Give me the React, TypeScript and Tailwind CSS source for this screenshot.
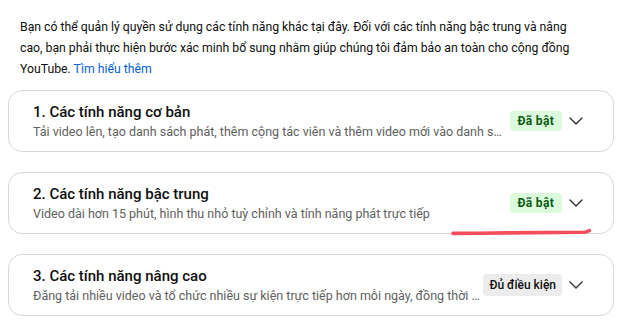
import { ChevronDown } from "lucide-react";

const features = [
  {
    title: "1. Các tính năng cơ bản",
    desc: "Tải video lên, tạo danh sách phát, thêm cộng tác viên và thêm video mới vào danh sách phát của cộng tác viên",
    status: "on",
  },
  {
    title: "2. Các tính năng bậc trung",
    desc: "Video dài hơn 15 phút, hình thu nhỏ tuỳ chỉnh và tính năng phát trực tiếp",
    status: "on",
  },
  {
    title: "3. Các tính năng nâng cao",
    desc: "Đăng tải nhiều video và tổ chức nhiều sự kiện trực tiếp hơn mỗi ngày, đồng thời kháng nghị thông báo vi phạm Nguyên tắc cộng đồng",
    status: "eligible",
  },
];

function FeatureCard({ title, desc, status }: { title: string; desc: string; status: string }) {
  return (
    <div className="ml-2 mr-[15px] flex h-[62px] items-center rounded-[14px] border border-[#d9d9d9] pl-6 pr-[25px]">
      <div className="min-w-0 flex-1">
        <div className="text-[15px] leading-5 font-medium text-[#0f0f0f]">{title}</div>
        <div className="mt-[1px] truncate text-[12.5px] leading-[18px] text-[#606060]">{desc}</div>
      </div>
      {status === "on" ? (
        <span className="ml-[6px] shrink-0 rounded-[4px] bg-[#dcfbdc] px-2 text-[12px] leading-5 font-bold tracking-[0.3px] text-[#0b5a12]">
          Đã bật
        </span>
      ) : (
        <span className="ml-[3px] shrink-0 rounded-[4px] bg-[#ececec] px-[6px] text-[12px] leading-[22px] font-medium text-[#0f0f0f]">
          Đủ điều kiện
        </span>
      )}
      <ChevronDown className="ml-[2px] h-6 w-6 shrink-0 text-[#303030]" strokeWidth={1.4} />
    </div>
  );
}

export default function App() {
  return (
    <div className="relative h-[330px] w-[629px] overflow-hidden bg-white font-['Roboto',sans-serif]">
      <p className="pl-5 pr-[40px] pt-[17px] text-[12.25px] leading-[21px] text-[#0f0f0f]">
        Bạn có thể quản lý quyền sử dụng các tính năng khác tại đây. Đối với các tính năng bậc trung và
        nâng cao, bạn phải thực hiện bước xác minh bổ sung nhằm giúp chúng tôi đảm bảo an toàn cho cộng
        đồng YouTube. <span className="text-[#065fd4]">Tìm hiểu thêm</span>
      </p>
      <div className="mt-[10px] flex flex-col gap-5">
        {features.map((f) => (
          <FeatureCard key={f.title} {...f} />
        ))}
      </div>
      <svg className="absolute left-0 top-0" width="629" height="330" fill="none">
        <path
          d="M453 233.4 C 500 233, 550 232.6, 585 232.2 C 587 231.8, 588.5 231, 589.5 230.6"
          stroke="#f44d5c"
          strokeWidth="3.6"
          strokeLinecap="round"
        />
      </svg>
    </div>
  );
}
